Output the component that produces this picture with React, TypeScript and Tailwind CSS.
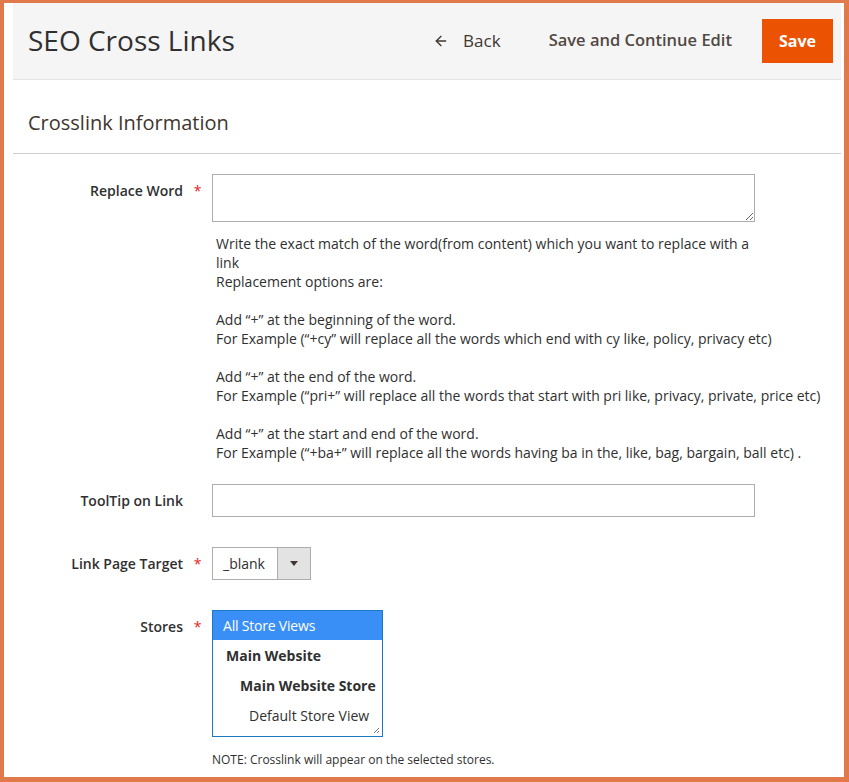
import { ArrowLeft } from "lucide-react"

const noteLines = [
  "Write the exact match of the word(from content) which you want to replace with a",
  "link",
  "Replacement options are:",
  "",
  "Add “+” at the beginning of the word.",
  "For Example (“+cy” will replace all the words which end with cy like, policy, privacy etc)",
  "",
  "Add “+” at the end of the word.",
  "For Example (“pri+” will replace all the words that start with pri like, privacy, private, price etc)",
  "",
  "Add “+” at the start and end of the word.",
  "For Example (“+ba+” will replace all the words having ba in the, like, bag, bargain, ball etc) .",
]

function FieldLabel({ text, required }: { text: string; required?: boolean }) {
  return (
    <div className="flex shrink-0">
      <div className="w-[170px] text-right text-[14px] font-semibold text-[#303030]">{text}</div>
      <div className="w-[29px] text-center text-[14px] text-[#e22626]">{required ? "*" : ""}</div>
    </div>
  )
}

function ResizeGrip() {
  return (
    <svg className="absolute bottom-[2px] right-[2px]" width="8" height="8" viewBox="0 0 8 8">
      <path d="M7 2 L2 7 M7 5 L5 7" stroke="#777" strokeWidth="1" />
    </svg>
  )
}

export default function App() {
  return (
    <div
      className="w-[849px] h-[782px] bg-white border-[#e07a4b] border-l-4 border-t-[3px] border-r-[5px] border-b-[5px] overflow-hidden"
      style={{ fontFamily: '"Open Sans", "Liberation Sans", sans-serif' }}
    >
      <div className="ml-[9px] mr-[3px]">
        {/* page header */}
        <div className="h-[77px] bg-[#f5f5f5] border-b border-[#e3e3e3] flex items-center pl-[15px] pr-[8px]">
          <h1 className="text-[28px] text-[#303030] font-normal flex-1 -mt-[2px]">SEO Cross Links</h1>
          <button className="flex items-center gap-[14px] text-[17px] text-[#41362f] mr-[48px] -mt-[1px]">
            <ArrowLeft className="w-[16px] h-[16px]" strokeWidth={2} />
            <span>Back</span>
          </button>
          <button className="text-[16.5px] font-semibold text-[#514943] mr-[30px] -mt-[1px]">Save and Continue Edit</button>
          <button className="h-[44px] w-[71px] bg-[#eb5202] text-white text-[16px] font-bold">Save</button>
        </div>

        {/* section title */}
        <div className="h-[74px] border-b border-[#cccccc] flex items-center pl-[15px] pt-[12px]">
          <h2 className="text-[20px] text-[#41362f]">Crosslink Information</h2>
        </div>

        <div className="pt-[20px]">
          {/* Replace Word */}
          <div className="flex">
            <div className="pt-[6px]">
              <FieldLabel text="Replace Word" required />
            </div>
            <div>
              <textarea className="block w-[543px] h-[48px] border border-[#adadad] resize-y" />
              <div className="pl-[4px] pt-[12px] text-[14px] leading-[19px] text-[#303030]">
                {noteLines.map((l, i) => (
                  <div key={i} className="h-[19px] whitespace-nowrap">{l}</div>
                ))}
              </div>
            </div>
          </div>

          {/* ToolTip */}
          <div className="flex items-center mt-[22px]">
            <FieldLabel text="ToolTip on Link" />
            <input className="w-[543px] h-[33px] border border-[#adadad]" />
          </div>

          {/* Link Page Target */}
          <div className="flex items-center mt-[30px]">
            <FieldLabel text="Link Page Target" required />
            <div className="flex h-[33px] w-[99px] border border-[#adadad]">
              <div className="flex-1 flex items-center pl-[10px] text-[14px] text-[#303030]">_blank</div>
              <div className="w-[33px] bg-[#e3e3e3] border-l border-[#adadad] flex items-center justify-center">
                <svg width="8" height="5" viewBox="0 0 8 5">
                  <path d="M0 0 L8 0 L4 5 Z" fill="#41362f" />
                </svg>
              </div>
            </div>
          </div>

          {/* Stores */}
          <div className="flex mt-[30px]">
            <div className="pt-[6px]">
              <FieldLabel text="Stores" required />
            </div>
            <div>
              <div className="relative w-[171px] h-[127px] border border-[#1979c3] text-[14px] text-[#303030]">
                <div className="h-[29px] bg-[#3a8ff7] text-white flex items-center pl-[10px] tracking-[-0.2px]">All Store Views</div>
                <div className="h-[30px] flex items-center pl-[13px] font-bold">Main Website</div>
                <div className="h-[30px] flex items-center pl-[27px] font-bold">Main Website Store</div>
                <div className="h-[30px] flex items-center pl-[36px]">Default Store View</div>
                <ResizeGrip />
              </div>
              <div className="pt-[14px] text-[12px] text-[#303030]">NOTE: Crosslink will appear on the selected stores.</div>
            </div>
          </div>
        </div>
      </div>
    </div>
  )
}
